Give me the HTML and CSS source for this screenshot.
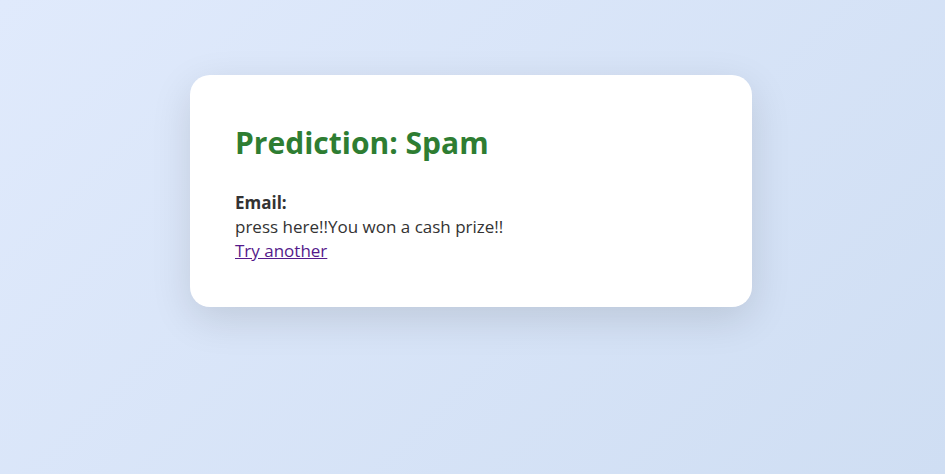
FILE: index.html
```html
<!DOCTYPE html>
<html>
<head>
<meta charset="utf-8">
<link rel="stylesheet" href="styles.css">
</head>
<body>
<main class="card">
  <h1 class="title">Prediction: Spam</h1>
  <p class="email"><strong>Email:</strong><br>press here!!You won a cash prize!!<br><a class="link" href="#">Try another</a></p>
</main>
</body>
</html>
```
FILE: styles.css
```css
html, body { height: 100%; }
body {
  margin: 0;
  background: linear-gradient(135deg, #e0eafc, #cfdef3);
  font-family: "Open Sans", "Noto Sans", sans-serif;
  color: #333;
  padding: 75px 3px 0 0;
  box-sizing: border-box;
}
.card {
  width: 562px;
  box-sizing: border-box;
  margin: 0 auto;
  background: #fff;
  border-radius: 20px;
  padding: 44px 44px 44px 45px;
  box-shadow: 0 12px 40px rgba(0, 0, 0, 0.12);
}
.title {
  margin: 3px 0 27px;
  color: #2e7d32;
  font-size: 30px;
  line-height: 42px;
  font-weight: 700;
}
.email {
  margin: 0;
  font-size: 17px;
  line-height: 24px;
}
.link { color: #551a8b; }
```
